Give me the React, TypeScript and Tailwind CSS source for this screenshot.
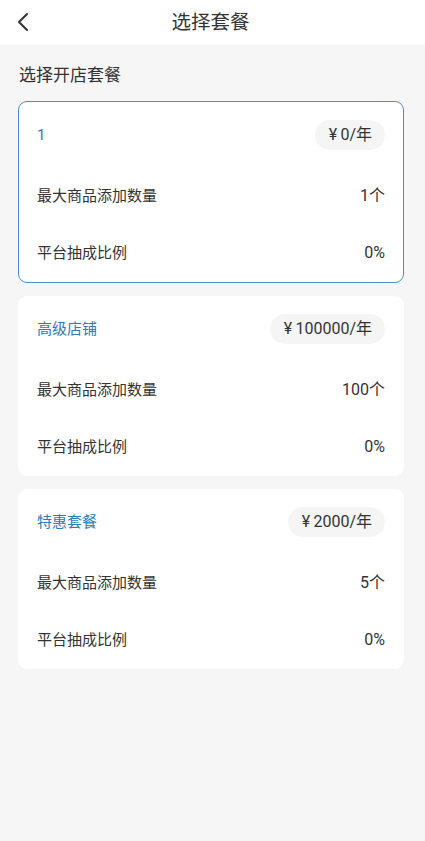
import React from "react";

const plans = [
  { name: "1", price: "0", max: "1个", rate: "0%", selected: true },
  { name: "高级店铺", price: "100000", max: "100个", rate: "0%", selected: false },
  { name: "特惠套餐", price: "2000", max: "5个", rate: "0%", selected: false },
];

export default function App() {
  return (
    <div
      className="w-[425px] h-[841px] bg-[#f6f6f6] flex flex-col text-[#333]"
      style={{ fontFamily: 'Roboto, "Noto Sans CJK SC", sans-serif' }}
    >
      <div className="h-[45px] bg-white relative flex items-center justify-center shrink-0">
        <div className="absolute left-[16px] top-[12px]">
          <svg width="14" height="20" viewBox="0 0 14 20" fill="none">
            <path d="M11 2 L3 10 L11 18" stroke="#333" strokeWidth="2" strokeLinecap="round" strokeLinejoin="round" />
          </svg>
        </div>
        <span className="text-[19.5px] leading-none text-[#333] pr-[4px]">选择套餐</span>
      </div>
      <div className="pl-[18px] pr-[21px]">
        <div className="pt-[19px] pb-[15px] text-[17px] leading-[22px] pl-[1px]">选择开店套餐</div>
        <div className="flex flex-col gap-[13px]">
          {plans.map((p) => (
            <div
              key={p.name}
              className={
                p.selected
                  ? "bg-white rounded-[9px] border border-[#4a8fc6] px-[18px] pt-[18px] pb-[19px]"
                  : "bg-white rounded-[9px] px-[19px] pt-[18px] pb-[19px]"
              }
            >
              <div className="h-[30px] flex items-center justify-between">
                <span className="text-[15px] text-[#2b7bb9]">{p.name}</span>
                <span className="h-[30px] pl-[14px] pr-[13px] rounded-full bg-[#f5f5f5] flex items-center text-[16px] text-[#333]">
                  {"¥\u2009" + p.price + "/年"}
                </span>
              </div>
              <div className="mt-[36px] h-[20px] flex items-center justify-between text-[15px]">
                <span>最大商品添加数量</span>
                <span className="text-[16px]">{p.max}</span>
              </div>
              <div className="mt-[37px] h-[20px] flex items-center justify-between text-[15px]">
                <span>平台抽成比例</span>
                <span className="text-[16px]">{p.rate}</span>
              </div>
            </div>
          ))}
        </div>
      </div>
    </div>
  );
}
